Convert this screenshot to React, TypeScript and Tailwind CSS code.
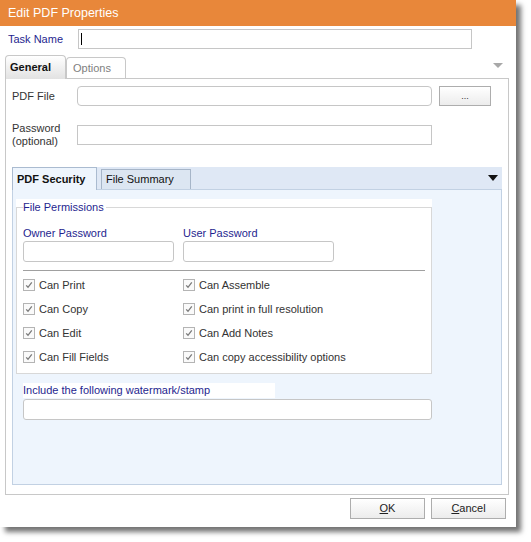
import React from "react";

const font = "font-['Liberation_Sans',Arial,sans-serif]";

const Check = ({ label }: { label: string }) => (
  <div className="flex h-[24px] items-center gap-[4px]">
    <span className="flex h-[12px] w-[12px] items-center justify-center border border-[#b4b4b4] bg-[#fafafa]">
      <svg width="8" height="8" viewBox="0 0 8 8">
        <path d="M1.2 4.4 L3 6.3 L6.8 1.4" fill="none" stroke="#7a7a7a" strokeWidth="1.3" />
      </svg>
    </span>
    <span className="text-[11px] text-[#333]">{label}</span>
  </div>
);

const Btn = ({ hot, rest }: { hot: string; rest: string }) => (
  <button className="h-[21px] w-[75px] border border-[#adadad] bg-gradient-to-b from-white to-[#ececec] text-[11px] text-[#222]">
    <span className="underline">{hot}</span>
    {rest}
  </button>
);

export default function App() {
  return (
    <div className={`min-h-screen bg-white ${font}`}>
      <div className="flex h-[527px] w-[516px] flex-col bg-white shadow-[5px_5px_5px_rgba(0,0,0,0.55)]">
        {/* Title */}
        <div className="flex h-[26px] items-center bg-[#e8873a] px-[8px] text-[12.5px] text-white">
          Edit PDF Properties
        </div>

        {/* Task name */}
        <div className="mt-[3px] flex h-[20px] items-center">
          <span className="w-[78px] pl-[8px] text-[11px] text-[#1f1f8f]">Task Name</span>
          <div className="flex h-[20px] w-[394px] items-center border border-[#c6c6c6] bg-white pl-[2px]">
            <span className="h-[12px] w-px bg-black" />
          </div>
        </div>

        {/* Outer tabs */}
        <div className="ml-[5px] mr-[13px] mt-[6px] flex h-[23px] items-end">
          <div className="relative z-10 -mb-px flex h-[24px] w-[61px] items-center rounded-t-sm border border-b-0 border-[#c8c8c8] bg-gradient-to-b from-white to-[#e2e2e2] pl-[4px] text-[11px] font-bold text-[#111]">
            General
          </div>
          <div className="flex h-[21px] w-[60px] items-center rounded-t-sm border border-b-0 border-[#c8c8c8] bg-white pl-[6px] text-[11px] text-[#808080]">
            Options
          </div>
          <svg className="mb-[10px] ml-auto" width="10" height="5" viewBox="0 0 10 5">
            <path d="M0 0 H10 L5 5 Z" fill="#a8a8a8" />
          </svg>
        </div>

        {/* Main panel */}
        <div className="ml-[5px] flex h-[417px] w-[504px] flex-col border border-[#c8c8c8]">
          <div className="mt-[7px] flex h-[20px] items-center pl-[6px]">
            <span className="w-[65px] text-[11px] text-[#333]">PDF File</span>
            <div className="h-[20px] w-[355px] rounded-sm border border-[#c6c6c6] bg-white" />
            <button className="ml-[7px] h-[20px] w-[52px] border border-[#adadad] bg-gradient-to-b from-white to-[#ececec] text-[9px] leading-none text-[#333]">
              ...
            </button>
          </div>

          <div className="mt-[16px] flex h-[26px] items-center pl-[6px]">
            <span className="w-[65px] text-[11px] leading-[13px] text-[#333]">
              Password
              <br />
              (optional)
            </span>
            <div className="h-[20px] w-[355px] border border-[#c6c6c6] bg-white" />
          </div>

          {/* Inner tab control */}
          <div className="ml-[6px] mt-[19px] flex w-[490px] flex-col">
            <div className="flex h-[22px] items-end bg-[#dfe8f5]">
              <div className="relative z-10 -mb-px flex h-[23px] w-[85px] items-center border border-b-0 border-[#aabbd0] bg-[#eef5fd] pl-[4px] text-[11px] font-bold text-[#111]">
                PDF Security
              </div>
              <div className="ml-[4px] flex h-[20px] w-[90px] items-center border border-b-0 border-[#a6b5c8] bg-[#dce6f2] pl-[4px] text-[11px] text-[#111]">
                File Summary
              </div>
              <svg className="mb-[8px] ml-auto mr-[4px]" width="10" height="6" viewBox="0 0 10 6">
                <path d="M0 0 H10 L5 6 Z" fill="#111" />
              </svg>
            </div>

            <div className="flex h-[296px] flex-col border border-[#c2d1e3] bg-[#eef5fd]">
              {/* File permissions group */}
              <div className="ml-[3px] mt-[9px] w-[416px] bg-white pt-[2px]">
                <fieldset className="border border-[#d8d8d8] px-[6px] pb-[4px]">
                  <legend className="pr-[2px] text-[11px] leading-[13px] text-[#1f1f8f]">
                    File Permissions
                  </legend>
                  <div className="mt-[13px] grid grid-cols-[160px_160px]">
                    <div className="flex flex-col">
                      <span className="text-[11px] leading-[13px] text-[#1f1f8f]">Owner Password</span>
                      <div className="mt-px h-[21px] w-[151px] rounded-[3px] border border-[#c6c6c6] bg-white" />
                    </div>
                    <div className="flex flex-col">
                      <span className="text-[11px] leading-[13px] text-[#1f1f8f]">User Password</span>
                      <div className="mt-px h-[21px] w-[151px] rounded-[3px] border border-[#c6c6c6] bg-white" />
                    </div>
                  </div>
                  <div className="mt-[8px] h-px w-[402px] bg-[#a0a0a0]" />
                  <div className="mt-[2px] grid grid-cols-[160px_1fr]">
                    <Check label="Can Print" />
                    <Check label="Can Assemble" />
                    <Check label="Can Copy" />
                    <Check label="Can print in full resolution" />
                    <Check label="Can Edit" />
                    <Check label="Can Add Notes" />
                    <Check label="Can Fill Fields" />
                    <Check label="Can copy accessibility options" />
                  </div>
                </fieldset>
              </div>

              {/* Watermark */}
              <div className="ml-[10px] mt-[9px] h-[15px] w-[252px] bg-white text-[11px] leading-[15px] text-[#1f1f8f]">
                Include the following watermark/stamp
              </div>
              <div className="ml-[10px] mt-px h-[21px] w-[409px] rounded-[3px] border border-[#c6c6c6] bg-white" />
            </div>
          </div>
        </div>

        {/* Buttons */}
        <div className="mr-[10px] mt-[3px] flex justify-end gap-[6px]">
          <Btn hot="O" rest="K" />
          <Btn hot="C" rest="ancel" />
        </div>
      </div>
    </div>
  );
}
